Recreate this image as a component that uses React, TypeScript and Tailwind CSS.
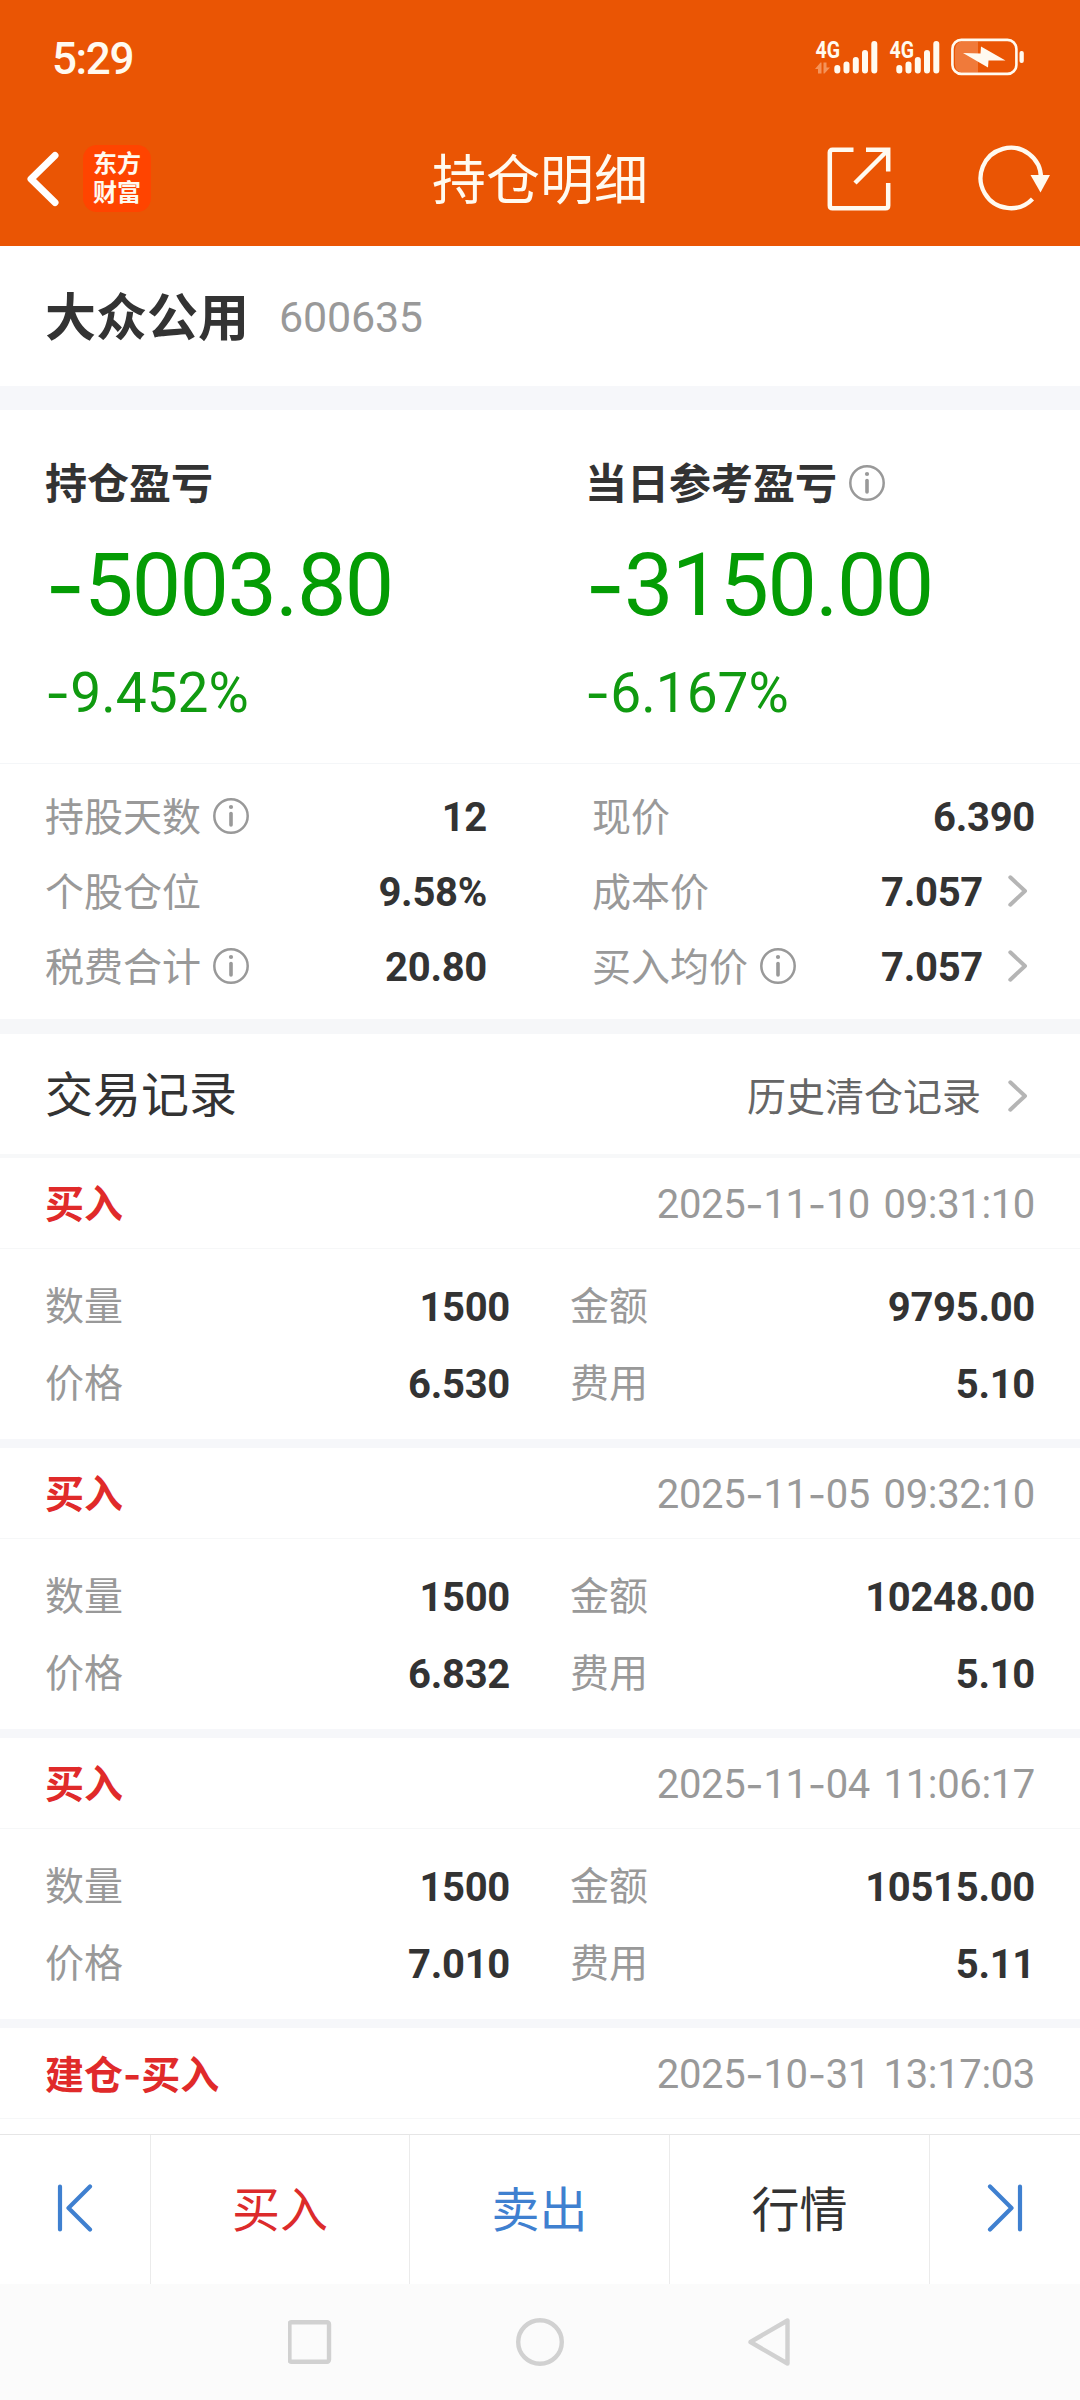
import { Fragment, ReactNode } from 'react';

interface ITrade {
  type: string;
  time: string;
  amount?: string;
  price?: string;
  total?: string;
  fee?: string;
}

const trades: ITrade[] = [
  { type: '买入', time: '2025-11-10 09:31:10', amount: '1500', price: '6.530', total: '9795.00', fee: '5.10' },
  { type: '买入', time: '2025-11-05 09:32:10', amount: '1500', price: '6.832', total: '10248.00', fee: '5.10' },
  { type: '买入', time: '2025-11-04 11:06:17', amount: '1500', price: '7.010', total: '10515.00', fee: '5.11' },
  { type: '建仓-买入', time: '2025-10-31 13:17:03' },
];

// Roboto's hyphen is too short next to its digits, Inter has a wide one
function Dashed({ text, bold }: { text: string; bold?: boolean }) {
  return (
    <>
      {text.split('-').map((part, i) => (
        <Fragment key={i}>
          {i > 0 && (
            <span className={bold ? "font-['Inter']" : "align-[-0.02em] font-['Inter'] leading-none"}>-</span>
          )}
          {part}
        </Fragment>
      ))}
    </>
  );
}

function InfoIcon() {
  return (
    <svg className="h-9 w-9 shrink-0" viewBox="0 0 36 36" fill="none" stroke="#999" strokeLinecap="round">
      <circle cx="18" cy="18" r="16.7" strokeWidth="2.5" />
      <path d="M18 15.5V27" strokeWidth="3.6" />
      <circle cx="18" cy="9" r="2.1" fill="#999" stroke="none" />
    </svg>
  );
}

function Chevron() {
  return (
    <svg className="h-8 w-5 shrink-0" viewBox="0 0 20 32" fill="none" stroke="#b5b5b5" strokeWidth="4" strokeLinecap="round" strokeLinejoin="round">
      <path d="M2.3 2.3L17 16L2.3 29.7" />
    </svg>
  );
}

function Signal({ data }: { data?: boolean }) {
  return (
    <svg className={data ? 'h-[52px] w-[63px]' : 'ml-[11px] h-[52px] w-[51px]'} viewBox={data ? '0 -8 63 52' : '12 -8 51 52'} fill="none" stroke="#fffaf0" strokeWidth="6" strokeLinecap="round">
      <text x={data ? 0.5 : 12.5} y="18.5" textLength="24.5" lengthAdjust="spacingAndGlyphs" fontFamily="Roboto" fontSize="23" fontWeight="700" fill="#fffaf0" stroke="none">4G</text>
      <path d="M22.3 29V31.5M31.5 25.5V31.5M40.8 21V31.5M50 14V31.5M59.3 5V31.5" />
      {data && (
        <path d="M0 30L5.5 23.5H6.5V34.5H3V30ZM8.5 23.5H11.5V28.5H15L9.5 34.5H8.5Z" fill="#f4935a" stroke="none" />
      )}
    </svg>
  );
}

function Battery() {
  return (
    <svg className="ml-[11px] h-[38px] w-[74px]" viewBox="0 0 74 38" fill="none">
      <path d="M12 3.5H27V34.5H12Q4 34.5 4 26V12Q4 3.5 12 3.5Z" fill="#f07a3a" />
      <rect x="1.4" y="1.9" width="64" height="34" rx="9" stroke="#fffaf0" strokeWidth="2.6" />
      <rect x="68.5" y="13" width="4.3" height="12" rx="2" fill="#fffaf0" />
      <path d="M12 15L29.5 15.5L30 8.5L54.5 22.5L37.5 22.5L37 29.5Z" fill="#fffaf0" />
    </svg>
  );
}

function Header() {
  return (
    <header className="flex h-[246px] flex-col bg-[#ea5504] text-[#fffaf0]">
      <div className="flex h-[114px] items-center pl-[52px] pr-[55px]">
        <span className="pt-1 text-[44px] font-medium leading-none tracking-[-1.4px]">5:29</span>
        <div className="ml-auto flex items-center">
          <Signal data />
          <Signal />
          <Battery />
        </div>
      </div>
      <div className="grid h-[129px] grid-cols-[1fr_auto_1fr] items-center">
        <div className="flex items-center pl-[26px]">
          <svg className="h-[56px] w-[34px]" viewBox="0 0 34 56" fill="none" stroke="white" strokeWidth="7" strokeLinecap="round" strokeLinejoin="round">
            <path d="M29 4.5L5 28L29 51.5" />
          </svg>
          <div className="ml-[23px] flex h-[67px] w-[68px] flex-col items-center justify-center rounded-[14px] bg-[#ff4400] text-[24px] font-bold leading-[29px]">
            <span>东方</span>
            <span>财富</span>
          </div>
        </div>
        <h1 className="pt-1.5 text-[54px] leading-none">持仓明细</h1>
        <div className="flex items-center justify-end pr-[30px]">
          <svg className="h-16 w-16" viewBox="0 0 64 64" fill="none" stroke="#fffaf0" strokeWidth="4.5">
            <path d="M26.5 2.8H5.5Q2.8 2.8 2.8 5.5V58.5Q2.8 61.2 5.5 61.2H58.5Q61.2 61.2 61.2 58.5V36M39 2.8H61.2V24.5M60.5 3.5L28 36" />
          </svg>
          <svg className="mb-0.5 ml-[85px] h-[66px] w-[74px]" viewBox="0 0 74 66" fill="none">
            <path d="M65 33A30.2 30.2 0 1 0 56.5 54" stroke="#fffaf0" strokeWidth="4.3" />
            <path d="M54.5 30H74L64.5 47.5Z" fill="#fffaf0" />
          </svg>
        </div>
      </div>
    </header>
  );
}

function Profit({ label, value, percent, info }: { label: string; value: string; percent: string; info?: boolean }) {
  return (
    <div className="flex w-1/2 flex-col pl-[45px]">
      <div className="flex h-[50px] items-center text-[42px] font-bold text-[#333]">
        <span className="pt-1 leading-none">{label}</span>
        {info && <span className="ml-3"><InfoIcon /></span>}
      </div>
      <div className="mt-[22px] h-[110px] text-[88px] leading-[110px] tracking-[-1.6px] text-[#049c04]">
        <Dashed text={value} />
      </div>
      <div className="mt-[18px] text-[55px] leading-[70px] text-[#109a10]">
        <Dashed text={percent} />
      </div>
    </div>
  );
}

function Field({ label, value, info, link }: { label: string; value: string; info?: boolean; link?: boolean }) {
  return (
    <div className="flex h-[75px] items-center text-[39px] leading-none">
      <span className="pt-[5px] text-[#999]">{label}</span>
      {info && <span className="ml-3"><InfoIcon /></span>}
      <span className="ml-auto pt-[5px] text-[40px] font-bold tracking-[-0.3px] text-[#333]">{value}</span>
      {link && <span className="ml-[25px] mr-[7px]"><Chevron /></span>}
    </div>
  );
}

function Cell({ label, value }: { label: string; value?: string }) {
  return (
    <div className="flex h-[77px] items-center justify-between pt-1 text-[39px] leading-none">
      <span className="text-[#999]">{label}</span>
      <span className="text-[40px] font-bold tracking-[-0.3px] text-[#333]">{value}</span>
    </div>
  );
}

function Trade({ trade }: { trade: ITrade }) {
  return (
    <li>
      <div className="flex h-[91px] items-center justify-between border-b border-[#f6f7f8] px-[45px] pt-1 text-[39px] leading-none">
        <span className="font-bold text-[#e02a2a]"><Dashed text={trade.type} bold /></span>
        <span className="text-[40px] tracking-[-0.35px] text-[#999] [word-spacing:4px]"><Dashed text={trade.time} /></span>
      </div>
      {trade.amount && (
        <div className="grid h-[199px] grid-cols-[465px_465px] content-start gap-x-[60px] border-b-[9px] border-[#f6f7fa] pl-[45px] pt-[18px]">
          <Cell label="数量" value={trade.amount} />
          <Cell label="金额" value={trade.total} />
          <Cell label="价格" value={trade.price} />
          <Cell label="费用" value={trade.fee} />
        </div>
      )}
    </li>
  );
}

function Tab({ className, children }: { className: string; children: ReactNode }) {
  return (
    <button className={`flex items-center justify-center border-[#ebebeb] text-[48px] leading-none ${className}`}>
      {children}
    </button>
  );
}

function SkipIcon({ flip }: { flip?: boolean }) {
  return (
    <svg className={flip ? 'h-12 w-9 rotate-180' : 'h-12 w-9'} viewBox="0 0 36 48" fill="none" stroke="#3f80d0" strokeWidth="4.2" strokeLinecap="round" strokeLinejoin="round">
      <path d="M3 2.5V45.5M33 2.5L11.5 24L33 45.5" />
    </svg>
  );
}

export default function App() {
  return (
    <div className="flex h-[2400px] w-[1080px] flex-col overflow-hidden bg-white font-['Roboto','Noto_Sans_CJK_SC',sans-serif]">
      <Header />

      <section className="flex h-[164px] items-center border-b-[24px] border-[#f6f7fa] pl-[45px]">
        <h2 className="pt-1 text-[51px] font-bold leading-none text-[#333]">大众公用</h2>
        <span className="ml-[30px] pt-0.5 text-[43px] leading-none tracking-[-0.2px] text-[#999]">600635</span>
      </section>

      <section className="flex h-[354px] border-b border-[#f4f6f8] pt-[48px]">
        <Profit label="持仓盈亏" value="-5003.80" percent="-9.452%" />
        <Profit label="当日参考盈亏" value="-3150.00" percent="-6.167%" info />
      </section>

      <section className="grid h-[270px] grid-cols-[442px_443px] content-start gap-x-[105px] border-b-[15px] border-[#f6f7f9] pl-[45px] pt-[14px]">
        <Field label="持股天数" value="12" info />
        <Field label="现价" value="6.390" />
        <Field label="个股仓位" value="9.58%" />
        <Field label="成本价" value="7.057" link />
        <Field label="税费合计" value="20.80" info />
        <Field label="买入均价" value="7.057" info link />
      </section>

      <section className="flex h-[124px] items-center border-b-4 border-[#f7f8f9] pl-[45px] pr-[52px]">
        <h2 className="pt-[3px] text-[48px] leading-none text-[#333]">交易记录</h2>
        <span className="ml-auto mt-2 text-[39px] leading-none text-[#666]">历史清仓记录</span>
        <span className="ml-[27px] mt-1"><Chevron /></span>
      </section>

      <ul className="h-[976px] overflow-hidden">
        {trades.map((trade) => (
          <Trade key={trade.time} trade={trade} />
        ))}
      </ul>

      <nav className="grid h-[150px] grid-cols-[151px_259px_260px_260px_150px] border-t border-[#e6e6e6]">
        <Tab className="border-r pb-1"><SkipIcon /></Tab>
        <Tab className="border-r pt-[3px] text-[#dc2b2b]">买入</Tab>
        <Tab className="border-r pt-[3px] text-[#3f80d0]">卖出</Tab>
        <Tab className="border-r pt-[3px] text-[#333]">行情</Tab>
        <Tab className="pb-1"><SkipIcon flip /></Tab>
      </nav>

      {/* Android navigation keys */}
      <div className="flex h-[116px] items-center justify-center bg-[#fbfbfb]">
        <svg className="h-12 w-[504px]" viewBox="0 0 504 48" fill="none" stroke="#d1d1d1" strokeWidth="4.4" strokeLinejoin="round">
          <rect x="1.4" y="4.2" width="39.6" height="39.6" rx="2" />
          <circle cx="252" cy="24" r="21.8" />
          <path d="M462.5 24L499.5 2.5V45.5Z" />
        </svg>
      </div>
    </div>
  );
}
